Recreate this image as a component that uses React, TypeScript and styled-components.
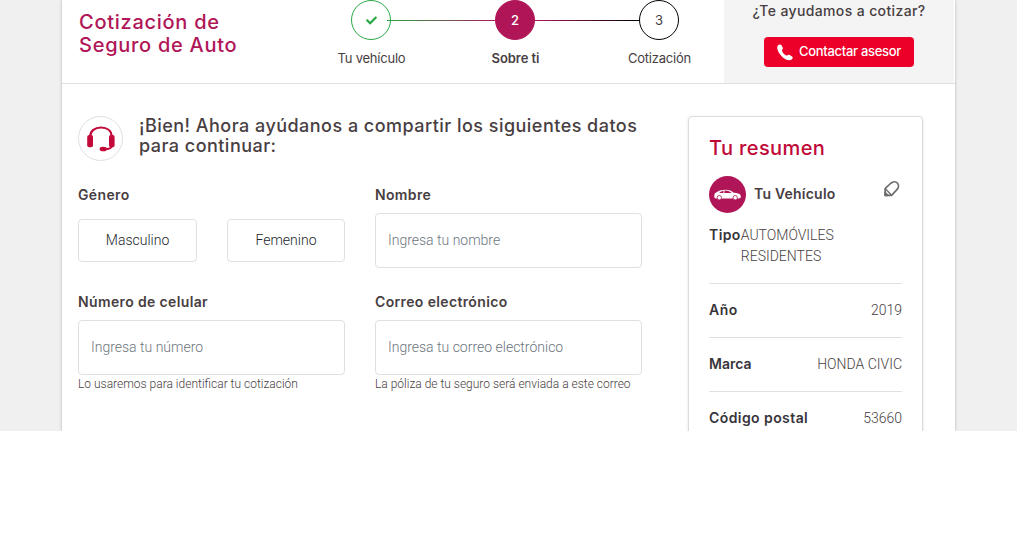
import React from 'react';
import styled, { createGlobalStyle } from 'styled-components';
import { FaCheck } from 'react-icons/fa';

const brand = '#b01657';
const ink = '#483e42';
const line = '#dee0e5';
const heading = "Inter, 'Open Sans', sans-serif";
const copy = 'Roboto, sans-serif';

const GlobalStyle = createGlobalStyle`
  *, *::before, *::after { box-sizing: border-box; }
  body { margin: 0; background: #fff; color: ${ink}; font-family: ${copy}; font-weight: 300; font-size: 14px; }
  h1, h2, p { margin: 0; }
  button, input { font: inherit; margin: 0; }
`;

const Page = styled.div`
  height: 431px;
  overflow: hidden;
  background: #f0f0f0;
  padding-left: 62px;
`;

const Panel = styled.div`
  width: 893px;
  height: 431px;
  background: #fff;
  box-shadow: 0 0 3px rgba(0, 0, 0, 0.25);
`;

const Header = styled.header`
  display: flex;
  height: 84px;
  border-bottom: 1px solid #e0e0e1;
`;

const Title = styled.h1`
  width: 249px;
  padding: 11px 0 0 17px;
  font: 500 20px/23px ${heading};
  letter-spacing: 0.73px;
  color: ${brand};
`;

const Steps = styled.div`
  width: 408px;
`;

const Track = styled.div`
  display: flex;
  align-items: center;
  padding: 0 40px;
`;

const StepCircle = styled.div<{ $fill?: string; $border: string; $color: string; $bold?: boolean }>`
  display: flex;
  align-items: center;
  justify-content: center;
  width: 40px;
  height: 40px;
  flex: none;
  border-radius: 50%;
  border: 1px solid ${p => p.$border};
  background: ${p => p.$fill ?? '#fff'};
  color: ${p => p.$color};
  font: ${p => (p.$bold ? 500 : 400)} 13px/20px ${heading};
`;

const Connector = styled.div<{ $from: string; $to: string; $inset?: number }>`
  width: ${p => 104 + (p.$inset ?? 0)}px;
  flex: none;
  height: 1px;
  margin: 1px 0 0 -${p => p.$inset ?? 0}px;
  background: linear-gradient(90deg, ${p => p.$from}, ${p => p.$to});
`;

const StepNames = styled.div`
  display: grid;
  grid-template-columns: repeat(3, 120px);
  column-gap: 24px;
  margin-top: 8px;
  padding-left: 0.5px;
`;

const StepName = styled.span<{ $active?: boolean }>`
  text-align: center;
  font: ${p => (p.$active ? 600 : 400)} 13px/20px ${heading};
  letter-spacing: ${p => (p.$active ? -0.05 : -0.22)}px;
`;

const Help = styled.div`
  display: flex;
  flex-direction: column;
  align-items: center;
  width: 230px;
  margin-left: 5px;
  padding-top: 1px;
  background: #f4f4f4;
`;

const HelpText = styled.p`
  font: 500 14px/20px ${heading};
  letter-spacing: 0.37px;
`;

const CallButton = styled.button`
  display: flex;
  align-items: center;
  gap: 6px;
  width: 150px;
  height: 30px;
  margin-top: 16px;
  padding: 0 0 0 13px;
  border: 0;
  border-radius: 4px;
  background: #ec0029;
  color: #fff;
  font: 500 13px/20px ${heading};
  letter-spacing: -0.3px;

  span { padding-bottom: 3px; white-space: nowrap; }
`;

const Body = styled.main`
  display: flex;
  align-items: flex-start;
  gap: 46px;
  padding: 32px 0 0 16px;
`;

const Form = styled.section`
  width: 564px;
`;

const Intro = styled.div`
  display: flex;
  gap: 16px;
  height: 69px;
`;

const Badge = styled.div`
  display: flex;
  align-items: center;
  justify-content: center;
  flex: none;
  width: 45px;
  height: 45px;
  border: 1px solid ${line};
  border-radius: 50%;
`;

const Lead = styled.h2`
  font: 500 18px/20px ${heading};
  letter-spacing: 0.47px;
`;

const Fields = styled.div`
  display: grid;
  grid-template-columns: 267px 267px;
  column-gap: 30px;
  row-gap: 24px;
`;

const Field = styled.div`
  display: flex;
  flex-direction: column;
  height: 83px;
`;

const Label = styled.label`
  font: 600 14px/20px ${heading};
  letter-spacing: 0.36px;
`;

const Input = styled.input`
  width: 100%;
  height: 55px;
  flex: none;
  margin-top: 8px;
  padding: 0 12px 2px;
  border: 1px solid ${line};
  border-radius: 4px;
  background: #fff;
  outline: 0;

  &::placeholder { color: #6c757d; opacity: 1; }
`;

const Hint = styled.span`
  font-size: 12px;
  line-height: 18px;
`;

const Choices = styled.div`
  display: grid;
  grid-template-columns: 119px 118px;
  column-gap: 30px;
  margin-top: 14px;
`;

const Choice = styled.button`
  height: 43px;
  padding: 0 0 2px;
  border: 1px solid ${line};
  border-radius: 4px;
  background: #fff;
  color: #212529;
`;

const Summary = styled.aside`
  width: 235px;
  height: 400px;
  padding: 19px 20px 0;
  border: 1px solid #dcdcde;
  border-radius: 4px;
  box-shadow: 0 1px 3px rgba(0, 0, 0, 0.12);
`;

const SummaryTitle = styled.h2`
  font: 500 20px/24px ${heading};
  letter-spacing: 0.38px;
  color: #bf0a38;
`;

const Vehicle = styled.div`
  display: flex;
  align-items: center;
  gap: 8px;
  margin: 16px 0 12px;
`;

const VehicleName = styled.span`
  padding-bottom: 2px;
  font: 600 14px/20px ${heading};
  letter-spacing: 0.22px;
`;

const CarBadge = styled.div`
  display: flex;
  align-items: center;
  justify-content: center;
  width: 37px;
  height: 37px;
  border-radius: 50%;
  background: ${brand};
`;

const EditButton = styled.button`
  display: flex;
  margin: 0 2px 12px auto;
  padding: 0;
  border: 0;
  background: none;
`;

const Item = styled.div`
  display: flex;
  justify-content: space-between;
  line-height: 21px;
  padding-bottom: 16px;
  margin-bottom: 16px;
  border-bottom: 1px solid #e0e0e1;
`;

const ItemName = styled.span<{ $spacing: number }>`
  flex: none;
  font: 600 14px/20px ${heading};
  letter-spacing: ${p => p.$spacing}px;
  color: #38353a;
`;

const HeadsetIcon = () => (
  <svg width="28" height="26" viewBox="0 0 28 26" fill="none">
    <path d="M3.2 10.5C3.2 4.6 8 1.5 14 1.5s10.600 3.100 10.600 9" stroke="#c30a3a" strokeWidth="2.200" />
    <rect x="0.200" y="9" width="5.800" height="12.200" rx="2" fill="#c30a3a" />
    <rect x="22" y="9" width="5.600" height="12.200" rx="2" fill="#c30a3a" />
    <path d="M25.200 19.500c-.6 2.700-3 3.700-7.200 3.700" stroke="#c30a3a" strokeWidth="1.800" />
    <ellipse cx="16.300" cy="23" rx="3.700" ry="2.300" fill="#c30a3a" />
  </svg>
);

const PhoneIcon = () => (
  <svg width="16" height="17" viewBox="0 0 16 17">
    <path
      d="M1 1.300C2 .2 3.600.1 4.300 1.100L5.800 3.700C6.200 4.700 5.700 5.300 4.900 6C5 8.300 7.300 10.900 9.900 11.700C10.700 10.700 11.400 10.400 12.200 10.800L15.100 12.500C16.100 13.300 15.900 14.500 15 15.300C13.500 16.700 10.900 16.600 8.500 15.300C4.800 13.300 1.600 9.500.5 5.600C.1 3.800.1 2.300 1 1.300Z"
      fill="#fff"
    />
  </svg>
);

const CarIcon = () => (
  <svg width="27" height="12" viewBox="0 0 27 12">
    <path
      d="M.6 8.900C.1 7.500.2 5.200 1.100 4L2.700 3.200C5 1.500 8.200.8 12 .8c3.300 0 5.300 1 7.900 2.900 3.400.3 5.600.9 6.400 2 .5.900.5 2.100.4 3.100L24.900 9.500H2Z"
      fill="#fff"
    />
    <path d="M5.200 3.900C6.600 2.500 8.200 1.900 9.800 1.700L9.300 4.100ZM10.700 1.600c3-.3 4.900.7 7 2.400L10.300 4.100Z" fill={brand} />
    <circle cx="5.300" cy="8.700" r="2.200" fill="#fff" stroke={brand} strokeWidth="0.800" />
    <circle cx="21.200" cy="8.700" r="2.200" fill="#fff" stroke={brand} strokeWidth="0.800" />
  </svg>
);

const PencilIcon = () => (
  <svg width="16" height="16" viewBox="0 0 16 16" fill="none" stroke="#6d6d6d" strokeWidth="1.700" strokeLinejoin="round">
    <path d="M1.100 14.300V7.600L6.500 2.500C9 .4 12 .5 13.500 2.200c1.500 1.700 1.300 4.500-.8 6.600L7.600 14.300Z" />
    <path d="M1.300 7.800 7.400 14.100" strokeWidth="1.400" />
    <path d="M1.100 11.500v2.800h2.800Z" fill="#6d6d6d" />
  </svg>
);

const details = [
  { name: 'Tipo', value: 'AUTOMÓVILES RESIDENTES', spacing: 0.4 },
  { name: 'Año', value: '2019', spacing: 0.5 },
  { name: 'Marca', value: 'HONDA CIVIC', spacing: 0 },
  { name: 'Código postal', value: '53660', spacing: 0.42 },
];

export default function App() {
  return (
    <>
      <GlobalStyle />
      <Page>
        <Panel>
          <Header>
            <Title>Cotización de<br />Seguro de Auto</Title>
            <Steps>
              <Track>
                <StepCircle $border="#28a745" $color="#28a745"><FaCheck size={11} /></StepCircle>
                <Connector $from="#28a745" $to={brand} $inset={4} />
                <StepCircle $border={brand} $fill={brand} $color="#fff" $bold>2</StepCircle>
                <Connector $from={brand} $to="#000" />
                <StepCircle $border="#000" $color={ink}>3</StepCircle>
              </Track>
              <StepNames>
                <StepName>Tu vehículo</StepName>
                <StepName $active>Sobre ti</StepName>
                <StepName>Cotización</StepName>
              </StepNames>
            </Steps>
            <Help>
              <HelpText>¿Te ayudamos a cotizar?</HelpText>
              <CallButton><PhoneIcon /><span>Contactar asesor</span></CallButton>
            </Help>
          </Header>
          <Body>
            <Form>
              <Intro>
                <Badge><HeadsetIcon /></Badge>
                <Lead>¡Bien! Ahora ayúdanos a compartir los siguientes datos<br />para continuar:</Lead>
              </Intro>
              <Fields>
                <Field>
                  <Label>Género</Label>
                  <Choices>
                    <Choice>Masculino</Choice>
                    <Choice>Femenino</Choice>
                  </Choices>
                </Field>
                <Field>
                  <Label>Nombre</Label>
                  <Input placeholder="Ingresa tu nombre" />
                </Field>
                <Field>
                  <Label>Número de celular</Label>
                  <Input placeholder="Ingresa tu número" />
                  <Hint>Lo usaremos para identificar tu cotización</Hint>
                </Field>
                <Field>
                  <Label>Correo electrónico</Label>
                  <Input placeholder="Ingresa tu correo electrónico" />
                  <Hint>La póliza de tu seguro será enviada a este correo</Hint>
                </Field>
              </Fields>
            </Form>
            <Summary>
              <SummaryTitle>Tu resumen</SummaryTitle>
              <Vehicle>
                <CarBadge><CarIcon /></CarBadge>
                <VehicleName>Tu Vehículo</VehicleName>
                <EditButton aria-label="Editar"><PencilIcon /></EditButton>
              </Vehicle>
              {details.map(({ name, value, spacing }) => (
                <Item key={name}>
                  <ItemName $spacing={spacing}>{name}</ItemName>
                  <span>{value}</span>
                </Item>
              ))}
            </Summary>
          </Body>
        </Panel>
      </Page>
    </>
  );
}
